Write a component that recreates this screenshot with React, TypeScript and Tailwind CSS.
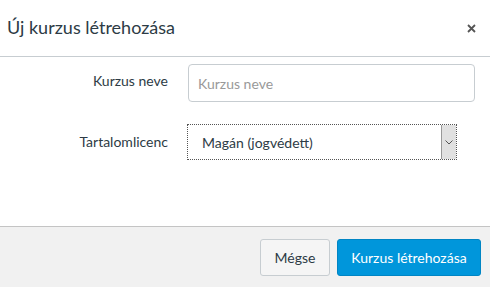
import React from "react";

export default function App() {
  return (
    <div
      className="w-[490px] h-[287px] bg-white flex flex-col text-[#2d3b45] overflow-hidden"
      style={{ fontFamily: "Lato, 'Liberation Sans', sans-serif" }}
    >
      <div className="h-[57px] shrink-0 border-b border-[#c7cdd1] flex items-center justify-between pl-[7px] pr-[11px]">
        <h2 className="text-[18px] leading-none font-normal pb-[3px]">Új kurzus létrehozása</h2>
        <button className="w-[16px] h-[16px] flex items-center justify-center text-[#555]">
          <svg width="9" height="9" viewBox="0 0 9 9">
            <path d="M1 1L8 8M8 1L1 8" stroke="#555" strokeWidth="1.8" />
          </svg>
        </button>
      </div>
      <div className="flex-1 flex flex-col pt-[7px]">
        <div className="flex items-center">
          <label className="w-[168px] text-right text-[14px] pb-[6px]">Kurzus neve</label>
          <div className="ml-[20px] w-[287px] h-[38px] border border-[#c7cdd1] rounded-[4px] flex items-center pl-[9px] text-[14px] text-[#999]">
            Kurzus neve
          </div>
        </div>
        <div className="flex items-center mt-[22px]">
          <label className="w-[168px] text-right text-[14px] pb-[1px]">Tartalomlicenc</label>
          <div className="ml-[19px] w-[270px] h-[36px] border border-dotted border-[#555] flex items-stretch">
            <div className="flex-1 flex items-center pl-[14px] text-[14px] text-[#2d3b45]">Magán (jogvédett)</div>
            <div className="w-[15px] bg-[#e1e1e1] border-l border-[#999] flex items-center justify-center">
              <svg width="8" height="5" viewBox="0 0 8 5">
                <path d="M0.5 0.5L4 4L7.5 0.5" stroke="#555" strokeWidth="1" fill="none" />
              </svg>
            </div>
          </div>
        </div>
      </div>
      <div className="h-[61px] shrink-0 border-t border-[#c4c4c4] bg-[#f1f1f1] flex items-start justify-end pt-[12px] pr-[9px] gap-[7px]">
        <button className="h-[37px] w-[70px] border border-[#c7cdd1] bg-[#f5f5f5] rounded-[3px] text-[14px] text-[#2d3b45]">
          Mégse
        </button>
        <button className="h-[37px] w-[144px] bg-[#0096db] border border-[#0085c4] rounded-[3px] text-[14px] text-white">
          Kurzus létrehozása
        </button>
      </div>
    </div>
  );
}
